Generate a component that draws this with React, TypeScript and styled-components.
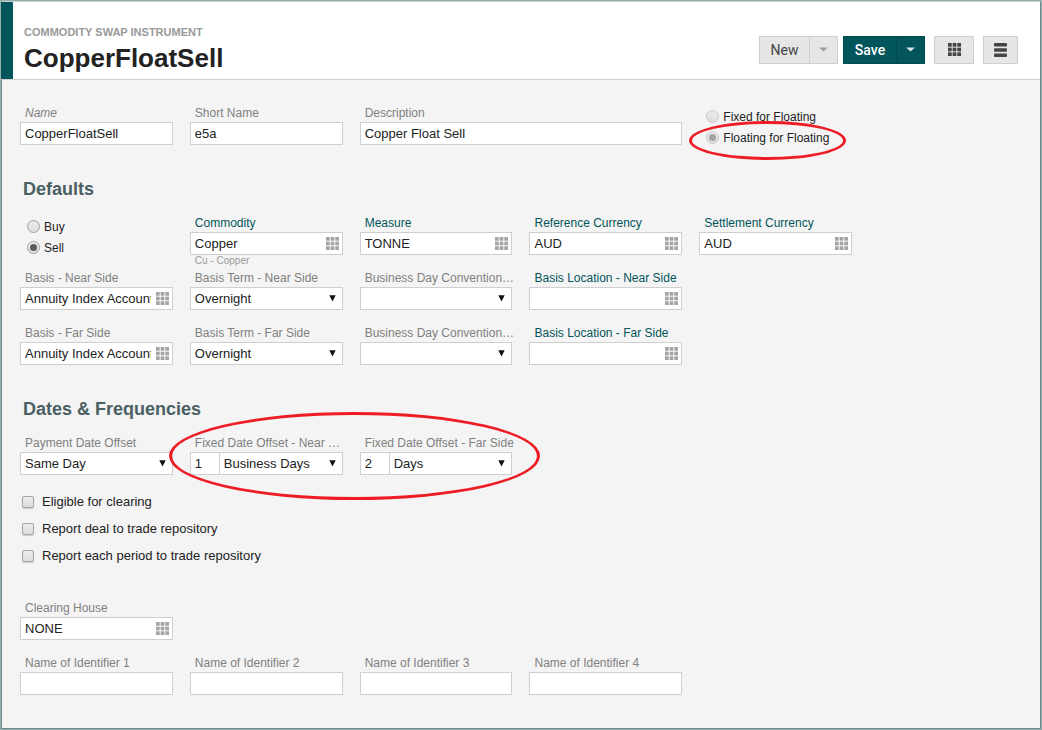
import React, { useId } from "react";
import styled, { createGlobalStyle, css } from "styled-components";

const teal = "#02555a";
const line = "#cfcfcf";

const GlobalStyle = createGlobalStyle`
  *, *::before, *::after { box-sizing: border-box; }
  body {
    margin: 0;
    background: #f4f4f4;
    color: #222;
    font-family: "Liberation Sans", Arial, sans-serif;
    font-size: 13px;
  }
  input, select, button { font: inherit; color: inherit; }
`;

const Window = styled.main`
  min-height: 100vh;
  padding: 1px;
  background: #93b1ae;
  display: flex;
`;

const Page = styled.div`
  flex: 1;
  min-width: 0;
  background: #f4f4f4;
  border: 1px solid #71888a;
  border-top-color: ${line};
`;

const Header = styled.header`
  display: flex;
  align-items: center;
  justify-content: space-between;
  height: 78px;
  margin-left: -1px;
  padding: 0 22px 0 23px;
  background: #fff;
  border-bottom: 1px solid ${line};
  box-shadow: inset 12px 0 ${teal};
`;

const Titles = styled.div`
  padding-top: 18px;
`;

const Kind = styled.p`
  margin: 0;
  font-size: 11px;
  line-height: 12px;
  font-weight: 700;
  color: #999;
  text-transform: uppercase;
`;

const Title = styled.h1`
  margin: 4px 0 0;
  font-size: 26px;
  line-height: 32px;
  font-weight: 700;
`;

const Toolbar = styled.div`
  display: flex;
  gap: 9px;
  padding-top: 18px;
`;

const SplitButton = styled.div`
  display: flex;

  & + & { margin-left: -4px; }
`;

const Button = styled.button<{ $primary?: boolean; $width: number }>`
  display: grid;
  place-items: center;
  width: ${(p) => p.$width}px;
  height: 28px;
  padding: 0;
  border: 1px solid ${(p) => (p.$primary ? "#024a4e" : line)};
  background: ${(p) => (p.$primary ? teal : "#e6e6e6")};
  color: ${(p) => (p.$primary ? "#fff" : "#444")};
  font-family: Roboto, "Liberation Sans", sans-serif;
  font-size: 14px;
  font-weight: ${(p) => (p.$primary ? 500 : 400)};
  cursor: pointer;

  & + & { margin-left: -1px; }
`;

const Form = styled.form`
  padding: 23px 18px 20px;
`;

const Grid = styled.div`
  display: grid;
  grid-template-columns: repeat(6, minmax(0, 1fr));
  column-gap: 17px;
`;

const Heading = styled.h2`
  display: flex;
  align-items: center;
  height: 55px;
  margin: 0;
  padding: 7px 3px 0;
  font-size: 18px;
  font-weight: 700;
  color: #4a5f63;
`;

const Cell = styled.div<{ $span?: number; $first?: boolean }>`
  position: relative;
  height: 55px;
  ${(p) => p.$span && css`grid-column-end: span ${p.$span};`}
  ${(p) => p.$first && css`grid-column-start: 1;`}
`;

const Label = styled.label<{ $tone?: "link" | "italic" }>`
  display: block;
  margin-right: -4px;
  padding: 2px 0 0 5px;
  font-size: 12px;
  line-height: 17px;
  color: ${(p) => (p.$tone === "link" ? teal : "#808080")};
  font-style: ${(p) => (p.$tone === "italic" ? "italic" : "normal")};
  white-space: nowrap;
  overflow: hidden;
  text-overflow: ellipsis;
`;

const Box = styled.div`
  display: flex;
  align-items: center;
  height: 23px;
  background: #fff;
  border: 1px solid ${line};
`;

const TextInput = styled.input`
  flex: 1;
  min-width: 0;
  width: 100%;
  height: 21px;
  padding: 0;
  margin-left: 4px;
  border: 0;
  outline: 0;
  background: transparent;
`;

const AmountInput = styled(TextInput)`
  flex: none;
  width: 24px;
`;

const PickButton = styled.button`
  display: grid;
  place-items: center;
  width: 19px;
  height: 21px;
  margin-left: 2px;
  padding: 0;
  border: 0;
  background: none;
  color: #a4a4a4;
  cursor: pointer;
`;

const SelectWrap = styled.div<{ $divided?: boolean }>`
  display: grid;
  grid-template-areas: "field";
  align-items: center;
  flex: 1;
  min-width: 0;
  height: 21px;
  ${(p) => p.$divided && css`border-left: 1px solid ${line};`}

  & > * { grid-area: field; }
  & > svg { justify-self: end; margin-right: 6px; pointer-events: none; }
`;

const SelectInput = styled.select`
  appearance: none;
  width: 100%;
  height: 21px;
  padding: 0 18px 0 4px;
  border: 0;
  outline: 0;
  background: transparent;
`;

const Hint = styled.small`
  display: block;
  padding-left: 5px;
  font-size: 10px;
  line-height: 12px;
  color: #999;
`;

const RadioGroup = styled.div`
  display: flex;
  flex-direction: column;
  padding: 3px 0 0 7px;
`;

const RadioLabel = styled.label`
  display: flex;
  align-items: center;
  gap: 4px;
  height: 21px;
  font-size: 12px;
  white-space: nowrap;
`;

const Radio = styled.input`
  appearance: none;
  display: grid;
  place-items: center;
  width: 13px;
  height: 13px;
  margin: 0;
  border: 1px solid #a0a0a0;
  border-radius: 50%;
  background: linear-gradient(#ececec, #dcdcdc);

  &:checked::before {
    content: "";
    width: 7px;
    height: 7px;
    border-radius: 50%;
    background: #5c5c5c;
  }
  &:disabled { border-color: #c8c8c8; }
  &:disabled::before { background: #a4a4a4; }
`;

const Checks = styled.div`
  padding: 0 0 29px 2px;
`;

const CheckLabel = styled.label`
  display: flex;
  align-items: center;
  gap: 8px;
  height: 27px;
`;

const Check = styled.input`
  appearance: none;
  width: 12px;
  height: 12px;
  margin: 0;
  border: 1px solid #a6a6a6;
  border-radius: 2px;
  background: linear-gradient(#ececec, #dcdcdc);
  box-shadow: 0 1px 1px #ccc;
`;

const Ring = styled.span<{ $inset: string }>`
  position: absolute;
  inset: ${(p) => p.$inset};
  border: 3px solid #ee1c25;
  border-radius: 50%;
  pointer-events: none;
  z-index: 1;
`;

const dotSteps = [0, 4.5, 9];

const DotsIcon = () => (
  <svg width="13" height="13" viewBox="0 0 12.6 12.6" fill="currentColor" aria-hidden="true">
    {dotSteps.map((y) =>
      dotSteps.map((x) => <rect key={`${x}-${y}`} x={x} y={y} width="3.6" height="3.6" />),
    )}
  </svg>
);

const BarsIcon = () => (
  <svg width="13" height="14" viewBox="0 0 13 14" fill="currentColor" aria-hidden="true">
    <rect width="13" height="3.4" rx="1" />
    <rect y="5.3" width="13" height="3.4" rx="1" />
    <rect y="10.6" width="13" height="3.4" rx="1" />
  </svg>
);

const CaretIcon = ({ color }: { color: string }) => (
  <svg width="9" height="5" viewBox="0 0 9 5" fill={color} aria-hidden="true">
    <path d="M0 0.5h9L4.5 4.5z" />
  </svg>
);

const ArrowIcon = () => (
  <svg width="7" height="7" viewBox="0 0 7 7" fill="#111" aria-hidden="true">
    <path d="M0.3 0.3h6.4L3.5 6.5z" />
  </svg>
);

interface FieldProps {
  label: string;
  value?: string;
  tone?: "link" | "italic";
  hint?: string;
  span?: number;
  first?: boolean;
  picker?: boolean;
}

function TextField({ label, value = "", tone, hint, span, first, picker }: FieldProps) {
  const id = useId();
  return (
    <Cell $span={span} $first={first}>
      <Label htmlFor={id} $tone={tone}>{label}</Label>
      <Box>
        <TextInput id={id} defaultValue={value} />
        {picker && (
          <PickButton type="button" aria-label={`Pick ${label}`}>
            <DotsIcon />
          </PickButton>
        )}
      </Box>
      {hint && <Hint>{hint}</Hint>}
    </Cell>
  );
}

function SelectField({ label, value = "", amount, ring }: { label: string; value?: string; amount?: string; ring?: string }) {
  const id = useId();
  return (
    <Cell>
      <Label htmlFor={id}>{label}</Label>
      <Box>
        {amount && <AmountInput defaultValue={amount} aria-label={`${label} amount`} />}
        <SelectWrap $divided={Boolean(amount)}>
          <SelectInput id={id} defaultValue={value}>
            <option value={value}>{value}</option>
          </SelectInput>
          <ArrowIcon />
        </SelectWrap>
      </Box>
      {ring && <Ring $inset={ring} />}
    </Cell>
  );
}

function Radios({ name, options, disabled, ring }: { name: string; options: string[]; disabled?: boolean; ring?: string }) {
  return (
    <Cell>
      <RadioGroup role="radiogroup" aria-label={name}>
        {options.map((option, i) => (
          <RadioLabel key={option}>
            <Radio type="radio" name={name} disabled={disabled} defaultChecked={i === 1} />
            {option}
          </RadioLabel>
        ))}
      </RadioGroup>
      {ring && <Ring $inset={ring} />}
    </Cell>
  );
}

export default function App() {
  return (
    <Window>
      <GlobalStyle />
      <Page>
        <Header>
          <Titles>
            <Kind>Commodity Swap Instrument</Kind>
            <Title>CopperFloatSell</Title>
          </Titles>
          <Toolbar>
            <SplitButton>
              <Button $width={51}>New</Button>
              <Button $width={29} aria-label="More new options"><CaretIcon color="#a0a0a0" /></Button>
            </SplitButton>
            <SplitButton>
              <Button $primary $width={54}>Save</Button>
              <Button $primary $width={29} aria-label="More save options"><CaretIcon color="#d5e4e4" /></Button>
            </SplitButton>
            <Button $width={40} aria-label="Grid"><DotsIcon /></Button>
            <SplitButton>
              <Button $width={35} aria-label="Menu"><BarsIcon /></Button>
            </SplitButton>
          </Toolbar>
        </Header>
        <Form>
          <Grid>
            <TextField label="Name" value="CopperFloatSell" tone="italic" />
            <TextField label="Short Name" value="e5a" />
            <TextField label="Description" value="Copper Float Sell" span={2} />
            <Radios name="Swap type" options={["Fixed for Floating", "Floating for Floating"]} disabled ring="18px 6px -2px -10px" />
          </Grid>
          <Heading>Defaults</Heading>
          <Grid>
            <Radios name="Direction" options={["Buy", "Sell"]} />
            <TextField label="Commodity" value="Copper" tone="link" hint="Cu - Copper" picker />
            <TextField label="Measure" value="TONNE" tone="link" picker />
            <TextField label="Reference Currency" value="AUD" tone="link" picker />
            <TextField label="Settlement Currency" value="AUD" tone="link" picker />
            <TextField label="Basis - Near Side" value="Annuity Index Account" first picker />
            <SelectField label="Basis Term - Near Side" value="Overnight" />
            <SelectField label="Business Day Convention - Near Side" />
            <TextField label="Basis Location - Near Side" tone="link" picker />
            <TextField label="Basis - Far Side" value="Annuity Index Account" first picker />
            <SelectField label="Basis Term - Far Side" value="Overnight" />
            <SelectField label="Business Day Convention - Far Side" />
            <TextField label="Basis Location - Far Side" tone="link" picker />
          </Grid>
          <Heading>Dates &amp; Frequencies</Heading>
          <Grid>
            <SelectField label="Payment Date Offset" value="Same Day" />
            <SelectField label="Fixed Date Offset - Near Side" value="Business Days" amount="1" ring="-21px calc(-100% - 45px) -12px -21px" />
            <SelectField label="Fixed Date Offset - Far Side" value="Days" amount="2" />
          </Grid>
          <Checks>
            <CheckLabel><Check type="checkbox" />Eligible for clearing</CheckLabel>
            <CheckLabel><Check type="checkbox" />Report deal to trade repository</CheckLabel>
            <CheckLabel><Check type="checkbox" />Report each period to trade repository</CheckLabel>
          </Checks>
          <Grid>
            <TextField label="Clearing House" value="NONE" picker />
            <TextField label="Name of Identifier 1" first />
            <TextField label="Name of Identifier 2" />
            <TextField label="Name of Identifier 3" />
            <TextField label="Name of Identifier 4" />
          </Grid>
        </Form>
      </Page>
    </Window>
  );
}
